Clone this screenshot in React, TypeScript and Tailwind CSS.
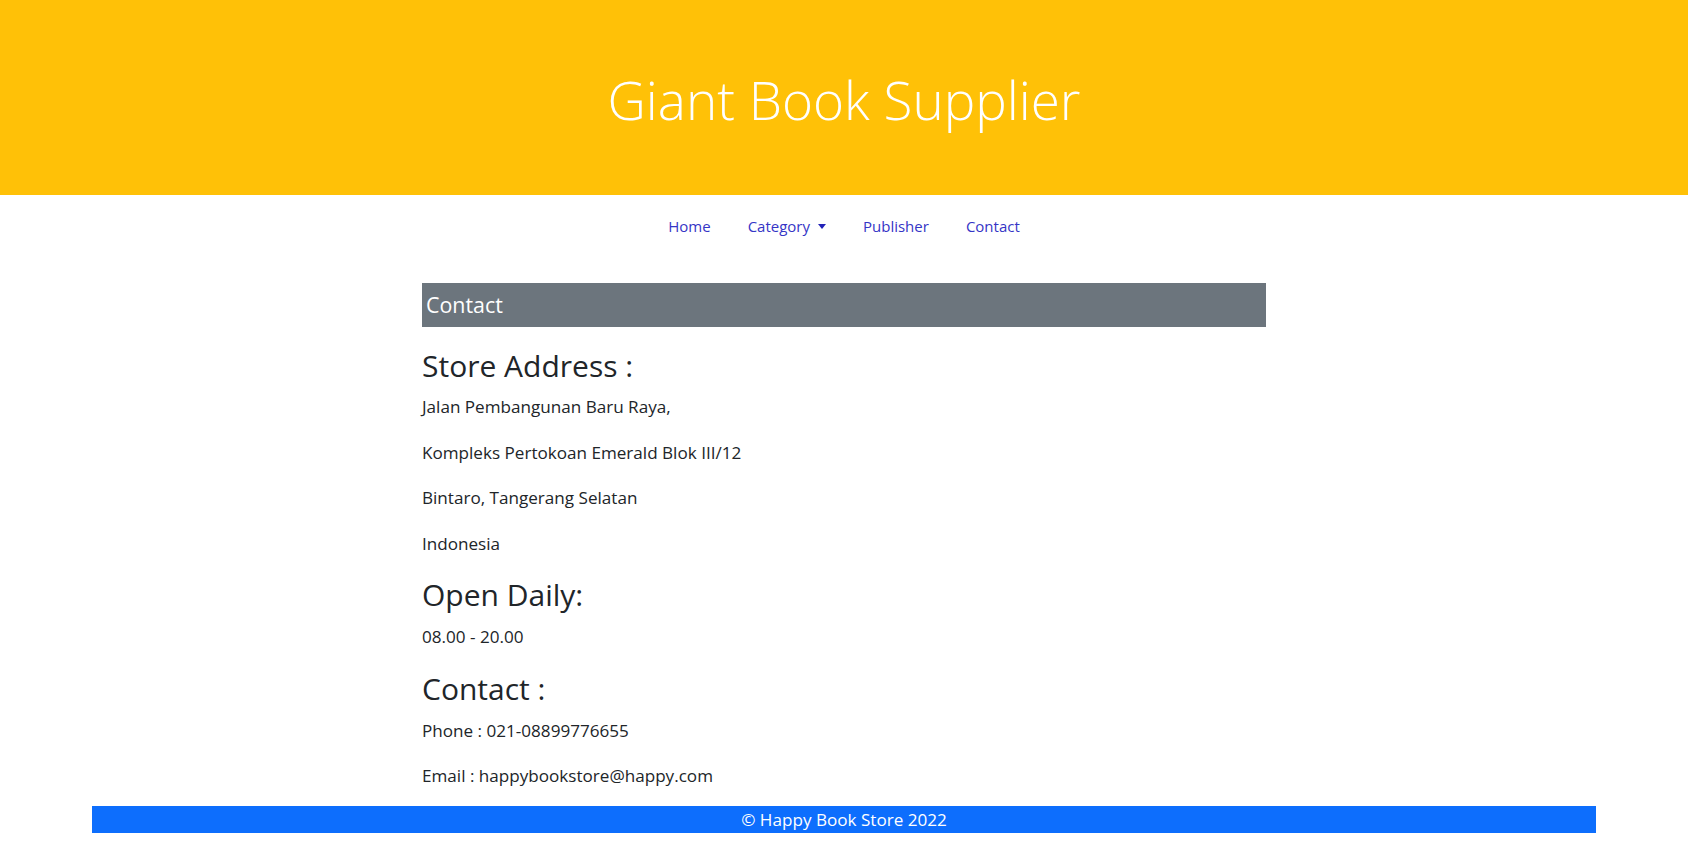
import React from "react";

const lines = [
  "Jalan Pembangunan Baru Raya,",
  "Kompleks Pertokoan Emerald Blok III/12",
  "Bintaro, Tangerang Selatan",
  "Indonesia",
];

function P({ children }: { children: React.ReactNode }) {
  return <p className="text-[17.1px] leading-[27px] mb-[18.5px] text-[#212529]">{children}</p>;
}

function H({ children, first }: { children: React.ReactNode; first?: boolean }) {
  return (
    <h3
      className={
        first
          ? "text-[30px] leading-[36px] mt-[21px] mb-[9px] text-[#212529] font-normal"
          : "text-[30px] leading-[36px] pt-[2px] mb-[10px] text-[#212529] font-normal"
      }
    >
      {children}
    </h3>
  );
}

export default function App() {
  return (
    <div className="min-h-[849px] bg-white font-['Open_Sans',sans-serif]">
      <header className="h-[195px] bg-[#ffc107] flex justify-center pt-[68px]">
        <h1 className="text-white font-light text-[53px] leading-[63.6px]">Giant Book Supplier</h1>
      </header>

      <nav className="flex justify-center pt-[19px]">
        <a className="px-[18.5px] text-[15px] leading-6 text-[#3535c6]" href="#">Home</a>
        <a className="px-[18.5px] text-[15px] leading-6 text-[#3535c6] flex items-center" href="#">
          Category
          <span className="ml-[8px] w-0 h-0 border-x-[4px] border-x-transparent border-t-[5px] border-t-[#2222b8]" />
        </a>
        <a className="px-[18.5px] text-[15px] leading-6 text-[#3535c6]" href="#">Publisher</a>
        <a className="px-[18.5px] text-[15px] leading-6 text-[#3535c6]" href="#">Contact</a>
      </nav>

      <main className="w-[844px] mx-auto mt-[45px]">
        <div className="h-[44px] bg-[#6c757d] text-white text-[21.4px] leading-[44px] pl-[4px]">Contact</div>
        <H first>Store Address :</H>
        {lines.map((l) => (
          <P key={l}>{l}</P>
        ))}
        <H>Open Daily:</H>
        <P>08.00 - 20.00</P>
        <H>Contact :</H>
        <P>Phone : 021-08899776655</P>
        <p className="text-[17.1px] leading-[27px] mb-[17px] text-[#212529]">Email : happybookstore@happy.com</p>
      </main>

      <footer className="w-[1504px] mx-auto h-[27px] bg-[#0d6efd] text-white text-center text-[17.1px] leading-[27px]">
        © Happy Book Store 2022
      </footer>
    </div>
  );
}
